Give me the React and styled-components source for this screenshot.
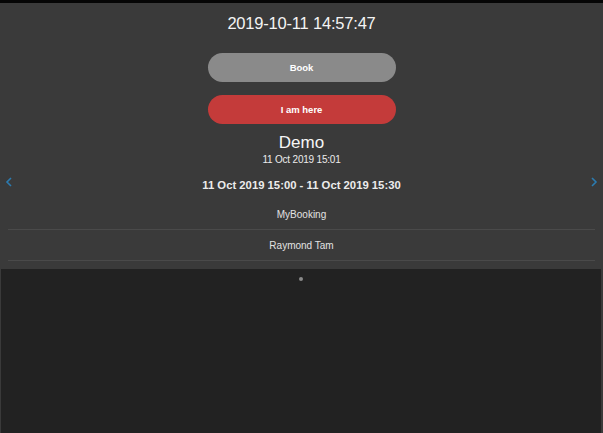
import React from 'react';
import styled, { createGlobalStyle } from 'styled-components';

const GlobalStyle = createGlobalStyle`
  html, body {
    margin: 0;
    padding: 0;
    height: 100%;
    background: #3a3a3a;
    font-family: "Liberation Sans", Arial, sans-serif;
  }
  #root {
    height: 100%;
  }
`;

const Page = styled.div`
  display: flex;
  flex-direction: column;
  height: 100%;
  border-top: 3px solid #050505;
  box-sizing: border-box;
`;

const Slide = styled.div`
  display: flex;
  flex-direction: column;
  align-items: center;
  padding: 10px 8px 8px;
  background: #3a3a3a;
`;

const Clock = styled.div`
  font-size: 16.5px;
  line-height: 20px;
  color: #f4f4f4;
  letter-spacing: -0.2px;
`;

const Button = styled.button`
  display: block;
  width: 188px;
  height: 29px;
  margin-top: ${(p) => p.gap}px;
  border: none;
  border-radius: 15px;
  background: ${(p) => p.bg};
  color: #fff;
  font-family: inherit;
  font-size: 9.5px;
  font-weight: bold;
  cursor: pointer;
`;

const Title = styled.div`
  margin-top: 8px;
  font-size: 17px;
  line-height: 21px;
  color: #f6f6f6;
`;

const SubDate = styled.div`
  font-size: 10px;
  line-height: 13px;
  color: #ececec;
  letter-spacing: -0.2px;
`;

const RangeRow = styled.div`
  display: flex;
  align-items: center;
  justify-content: space-between;
  align-self: stretch;
  margin: 11px -3px 0 -3px;
  height: 16px;
`;

const Arrow = styled.svg`
  width: 8px;
  height: 10px;
  flex: none;
  align-self: flex-start;
`;

const Range = styled.div`
  font-size: 11.3px;
  font-weight: bold;
  color: #ececec;
`;

const InfoRow = styled.div`
  align-self: stretch;
  height: 30px;
  display: flex;
  align-items: center;
  justify-content: center;
  font-size: 10px;
  color: #e2e2e2;
  border-bottom: 1px solid #4a4a4a;
  margin-top: ${(p) => p.gap || 0}px;
`;

const Pager = styled.div`
  flex: 1;
  margin: 0 2px 0 1px;
  background: #222;
  display: flex;
  justify-content: center;
  padding-top: 8px;
`;

const Dot = styled.span`
  width: 4px;
  height: 4px;
  border-radius: 50%;
  background: #8a8a8a;
`;

function Chevron({ dir }) {
  const d = dir === 'left' ? 'M6 1 L2 5 L6 9' : 'M2 1 L6 5 L2 9';
  return (
    <Arrow viewBox="0 0 8 10">
      <path d={d} fill="none" stroke="#2b7bb0" strokeWidth="1.6" />
    </Arrow>
  );
}

export default function App() {
  return (
    <>
      <GlobalStyle />
      <Page>
        <Slide>
          <Clock>2019-10-11 14:57:47</Clock>
          <Button gap={20} bg="#8a8a8a">Book</Button>
          <Button gap={13} bg="#c43b3a">I am here</Button>
          <Title>Demo</Title>
          <SubDate>11 Oct 2019 15:01</SubDate>
          <RangeRow>
            <Chevron dir="left" />
            <Range>11 Oct 2019 15:00 - 11 Oct 2019 15:30</Range>
            <Chevron dir="right" />
          </RangeRow>
          <InfoRow gap={6}>MyBooking</InfoRow>
          <InfoRow>Raymond Tam</InfoRow>
        </Slide>
        <Pager>
          <Dot />
        </Pager>
      </Page>
    </>
  );
}
